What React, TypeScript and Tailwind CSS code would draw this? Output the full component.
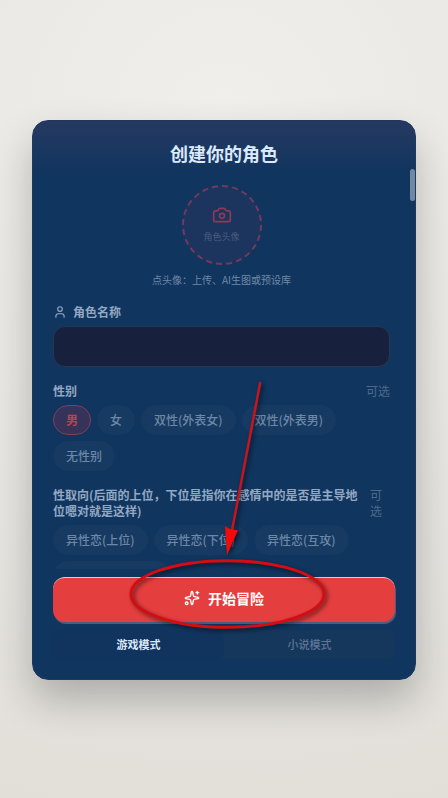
import { useState } from "react";
import { Camera, Sparkles, User } from "lucide-react";

const genders = ["男", "女", "双性(外表女)", "双性(外表男)", "无性别"];
const orientations = ["异性恋(上位)", "异性恋(下位)", "异性恋(互攻)"];

type ChipProps = { label: string; selected: boolean; onClick: () => void };

function Chip({ label, selected, onClick }: ChipProps) {
  return (
    <button
      type="button"
      aria-pressed={selected}
      onClick={onClick}
      className={`h-[30px] whitespace-nowrap rounded-full border px-3 text-xs ${
        selected
          ? "border-[#853d5c] bg-[#36335a] font-bold text-[#c93d4b]"
          : "border-[#173a62] bg-[#173a62] font-medium text-[#6d87a5]"
      }`}
    >
      {label}
    </button>
  );
}

function Annotation() {
  return (
    <svg
      aria-hidden="true"
      viewBox="0 0 384 560"
      className="pointer-events-none absolute inset-0 h-full w-full [filter:drop-shadow(2px_2px_2px_rgba(0,0,0,0.6))]"
    >
      <ellipse cx="195.500" cy="475" rx="97" ry="33.500" fill="none" stroke="#d20d14" strokeWidth="3" />
      <path d="M228.500 262 L199.500 414" stroke="#c9141c" strokeWidth="2.500" />
      <path d="M193 407 L199 410 L206 411 L195 436 Z" fill="#f40a0a" />
    </svg>
  );
}

export default function App() {
  const [name, setName] = useState("");
  const [gender, setGender] = useState("男");
  const [orientation, setOrientation] = useState("");
  const [mode, setMode] = useState("游戏模式");

  return (
    <main className="flex min-h-screen items-center justify-center bg-[radial-gradient(circle_at_50%_15%,#f0efeb_0%,#e8e6e2_55%,#e2dfd9_100%)] px-8 pt-[34px] pb-8 font-['Noto_Sans_CJK_SC',sans-serif] text-xs">
      <section className="relative flex h-[560px] w-full max-w-[384px] flex-col rounded-2xl border border-[#203a5d] bg-[linear-gradient(#263961_0px,#10355f_52px)] shadow-[0_20px_40px_rgba(0,0,0,0.24)]">
        <h1 className="pt-[18px] pb-0.5 text-center text-lg leading-7 font-bold text-[#dbe9fb]">创建你的角色</h1>

        <div className="flex min-h-0 flex-1">
          <div className="min-w-0 flex-1 overflow-y-auto pt-4 pr-[25px] pl-5 [scrollbar-width:none]">
            <div className="flex flex-col items-center">
              <button
                type="button"
                className="relative flex size-20 flex-col items-center justify-center gap-1 rounded-full bg-[#1c355e] text-[9px] leading-4 text-[#4a5c7f]"
              >
                <svg aria-hidden="true" viewBox="0 0 80 80" className="absolute inset-0 size-full">
                  <circle cx="40" cy="40" r="39" fill="none" stroke="#74395c" strokeWidth="2" strokeDasharray="6 4.200" />
                </svg>
                <Camera className="size-5 text-[#8d3a54]" strokeWidth={2} />
                角色头像
              </button>
              <p className="mt-[7px] text-[10px] leading-4 text-[#7088a6]">点头像：上传、AI生图或预设库</p>
            </div>

            <label htmlFor="name" className="mt-4 flex items-center gap-1.5 leading-4 font-bold text-[#93a8c2]">
              <User className="size-3.5" strokeWidth={2} />
              角色名称
            </label>
            <input
              id="name"
              value={name}
              onChange={(e) => setName(e.target.value)}
              className="mt-1.5 block h-[41px] w-full rounded-xl border border-[#2a3552] bg-[#17213e] px-3 text-sm text-white outline-none"
            />

            <div className="mt-4 flex justify-between leading-4">
              <h2 className="font-bold text-[#93a8c2]">性别</h2>
              <span className="text-[#4d6a8e]">可选</span>
            </div>
            <div className="mt-1.5 flex flex-wrap gap-1.5">
              {genders.map((g) => (
                <Chip key={g} label={g} selected={gender === g} onClick={() => setGender(g)} />
              ))}
            </div>

            <div className="mt-4 flex justify-between gap-3 leading-4">
              <h2 className="flex-1 font-bold text-[#93a8c2]">
                性取向(后面的上位，下位是指你在感情中的是否是主导地位嗯对就是这样)
              </h2>
              <span className="w-5 text-[#4d6a8e]">可选</span>
            </div>
            <div className="mt-1.5 flex flex-wrap gap-1.5">
              {orientations.map((o) => (
                <Chip key={o} label={o} selected={orientation === o} onClick={() => setOrientation(o)} />
              ))}
              <span className="h-[30px] w-[118px] rounded-full bg-[#173a62]" />
            </div>
          </div>
          <div className="-ml-[5px] h-8 w-[5px] rounded-full bg-[#7188a3]" />
        </div>

        <div className="px-5 pt-2 pb-5">
          <button
            type="button"
            className="flex h-[45px] w-full items-center justify-center gap-2 rounded-xl border-t border-[#f3c3cc] bg-[#e53e3e] pb-1 text-sm font-bold text-white shadow-[1px_2px_0_#4d5d80]"
          >
            <Sparkles className="size-4" strokeWidth={2} />
            开始冒险
          </button>
          <div className="mt-2 flex h-[29px] rounded-lg bg-[#15375c] text-[11px]">
            {["游戏模式", "小说模式"].map((m) => (
              <button
                key={m}
                type="button"
                aria-pressed={mode === m}
                onClick={() => setMode(m)}
                className={`flex-1 rounded-lg ${mode === m ? "bg-[#10345e] font-bold text-[#dbe9fb]" : "font-medium text-[#5d7696]"}`}
              >
                {m}
              </button>
            ))}
          </div>
        </div>
        <Annotation />
      </section>
    </main>
  );
}
